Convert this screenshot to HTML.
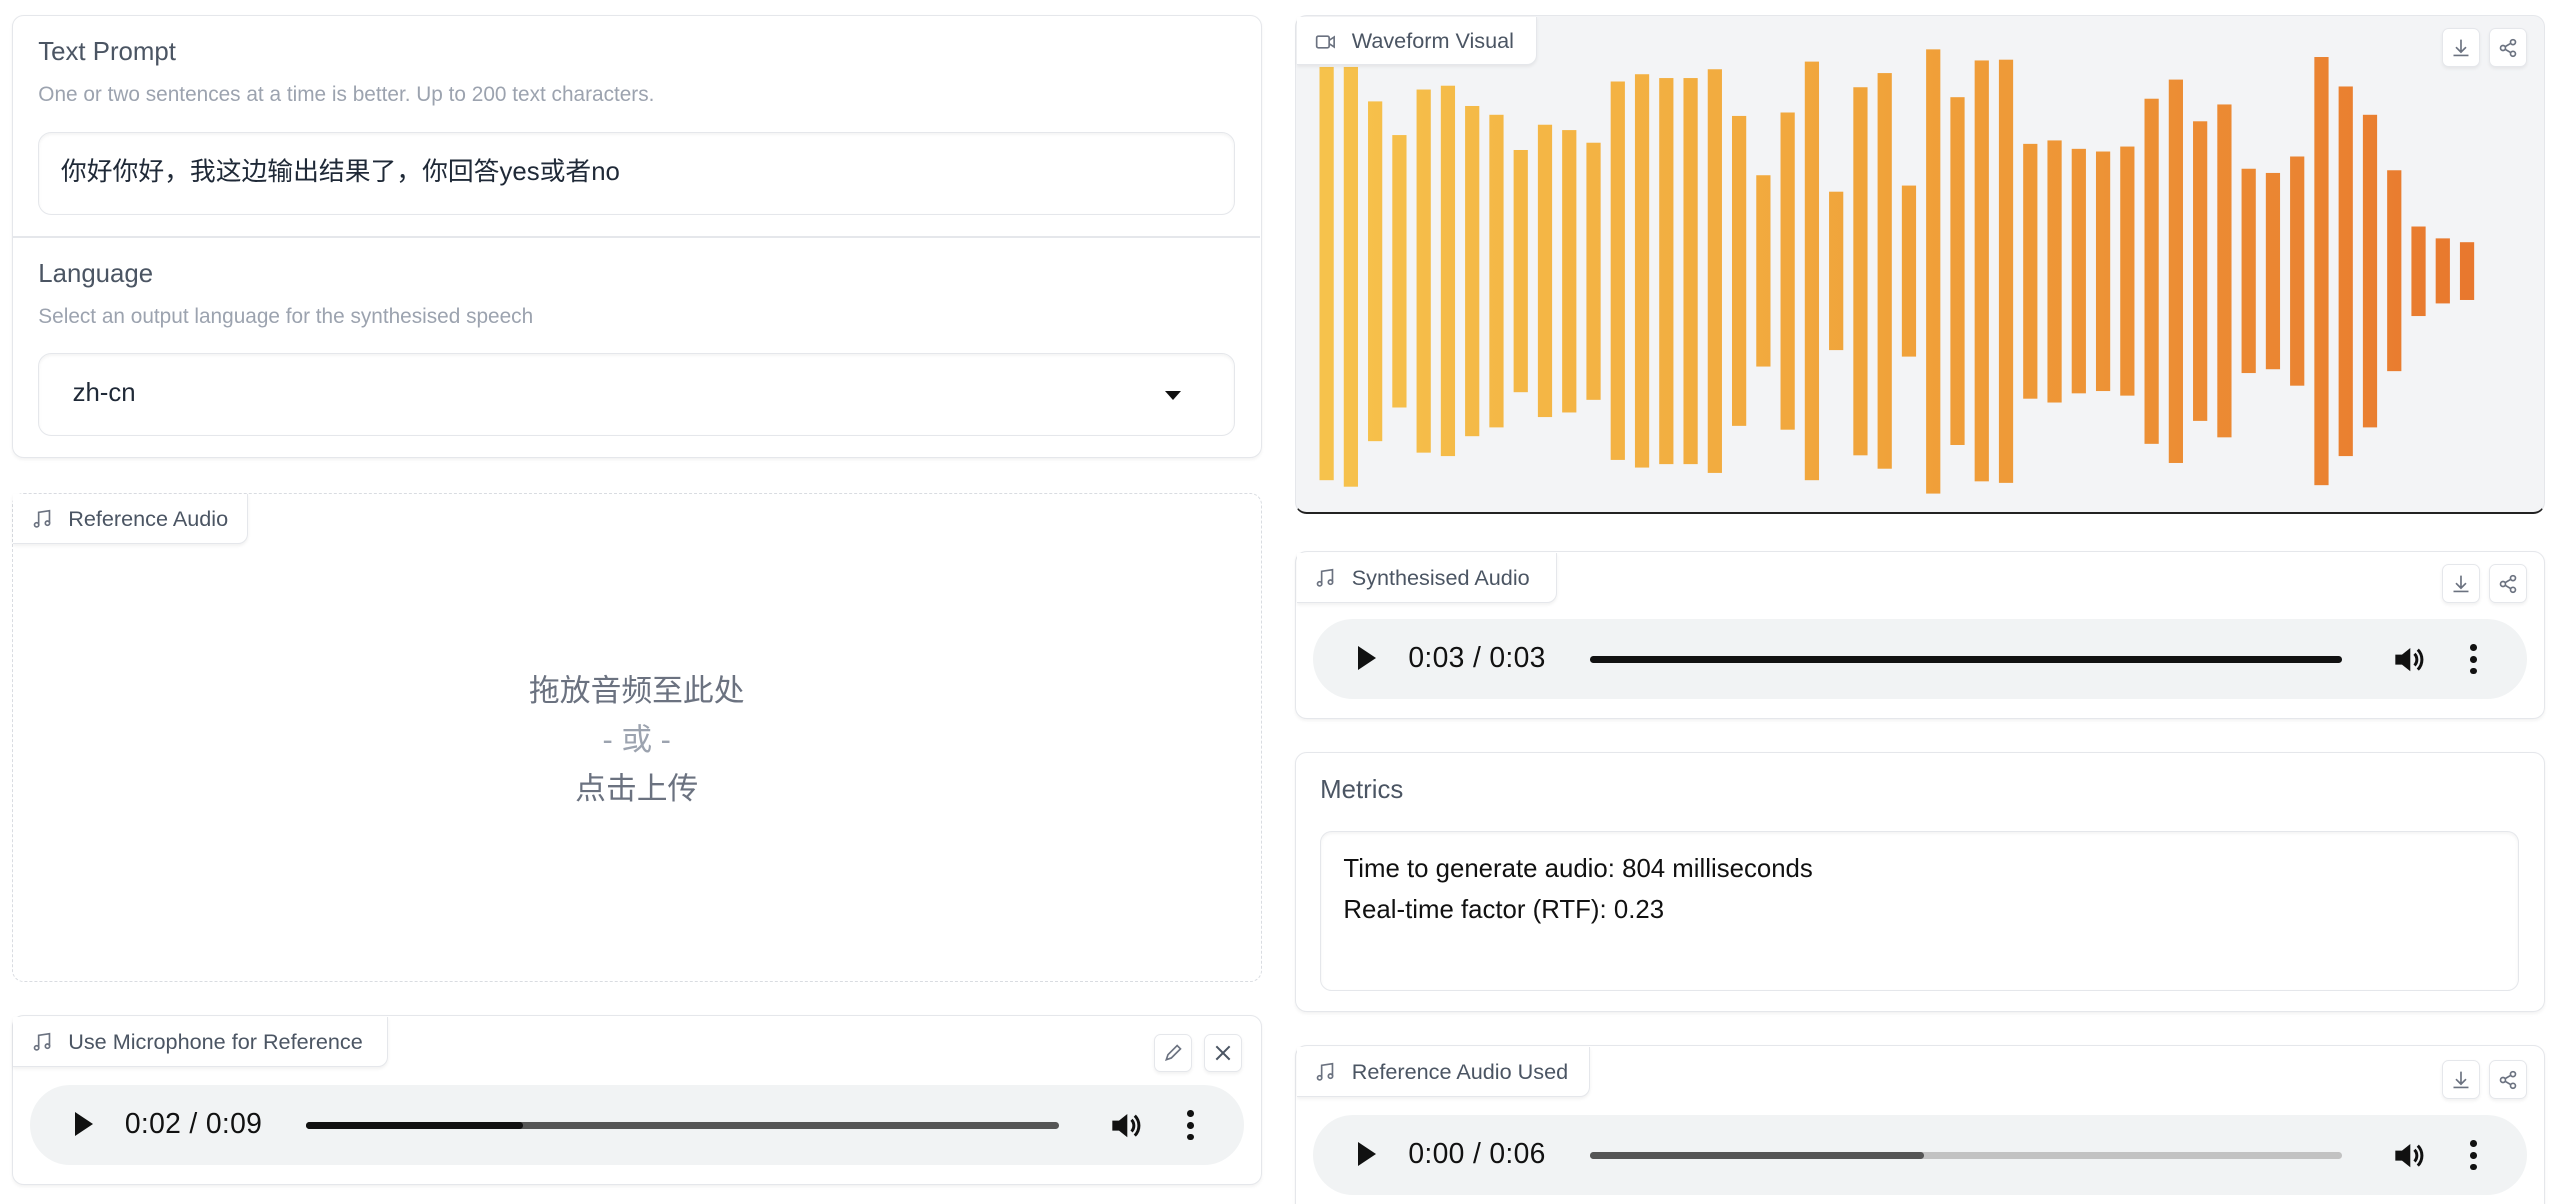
<!DOCTYPE html>
<html><head><meta charset="utf-8"><style>
html,body{margin:0;padding:0;background:#fff;overflow:hidden}
body{width:1545px;height:723.3px;zoom:1.66473;position:relative;font-family:"Liberation Sans","Noto Sans CJK SC",sans-serif}
.a{position:absolute;box-sizing:border-box}
.card{border:1px solid #e5e7eb;border-radius:7px;background:#fff;box-shadow:0 1px 2px rgba(0,0,0,.05)}
.lbl{font-size:15.5px;color:#4b5563}
.desc{font-size:12.5px;color:#9ca3af}
.inp{border:1px solid #e5e7eb;border-radius:8px;background:#fff;box-shadow:inset 0 1px 2px rgba(0,0,0,.05);font-size:15.5px;color:#1f2937;padding-left:13px;line-height:48px}
.tab{background:#fff;border:1px solid #e5e7eb;border-top:none;border-left:none;border-radius:0 0 6px 0;font-size:13px;color:#4b5563;height:30px;line-height:30px;padding-left:33px;box-shadow:0 1px 2px rgba(0,0,0,.06)}
.tab svg{position:absolute;left:11px;top:9px}
.btn{width:23px;height:23px;border:1px solid #e5e7eb;border-radius:4px;background:#fff;box-shadow:0 1px 2px rgba(0,0,0,.06)}
.btn svg{position:absolute;left:5px;top:5px}
.pl{background:#f1f3f4;border-radius:24px;height:48px}
.pl .t{position:absolute;top:13px;font-size:17px;color:#111;letter-spacing:.2px}
.play{position:absolute;top:16px;width:0;height:0;border-left:11px solid #111;border-top:7.5px solid transparent;border-bottom:7.5px solid transparent}
.bar{position:absolute;top:22px;height:4px;border-radius:2px}
.dots{position:absolute;top:15px;width:4px}
.dots i{display:block;width:4px;height:4px;border-radius:2px;background:#111;margin-bottom:3px}
</style></head><body>

<!-- Card 1 -->
<div class="a card" style="left:7px;top:9px;width:751px;height:266px"></div>
<div class="a lbl" style="left:23px;top:23px">Text Prompt</div>
<div class="a desc" style="left:23px;top:50px">One or two sentences at a time is better. Up to 200 text characters.</div>
<div class="a inp" style="left:23px;top:79px;width:719px;height:50px">你好你好，我这边输出结果了，你回答yes或者no</div>
<div class="a" style="left:8px;top:142px;width:749px;height:1px;background:#e5e7eb"></div>
<div class="a lbl" style="left:23px;top:156px">Language</div>
<div class="a desc" style="left:23px;top:183px">Select an output language for the synthesised speech</div>
<div class="a inp" style="left:23px;top:212px;width:719px;height:50px;padding-left:20px">zh-cn</div>
<div class="a" style="left:700px;top:235px;width:0;height:0;border-left:5px solid transparent;border-right:5px solid transparent;border-top:6px solid #111"></div>

<!-- Reference Audio -->
<div class="a" style="left:7px;top:296px;width:751px;height:294px;border:1px dashed #d9dce1;border-radius:7px"></div>
<div class="a tab" style="left:8px;top:297px;width:141px">
<svg width="12" height="12" viewBox="0 0 12 12" fill="none" stroke="#6b7280" stroke-width="1"><path d="M4 9.5V2L10.5 1V8.5"/><circle cx="2.8" cy="9.5" r="1.3"/><circle cx="9.3" cy="8.5" r="1.3"/></svg>Reference Audio</div>
<div class="a" style="left:7px;top:400px;width:751px;text-align:center;font-size:18.5px;color:#6b7280;line-height:29.5px">拖放音频至此处<br><span style="color:#9ca3af">- 或 -</span><br>点击上传</div>

<!-- Mic card -->
<div class="a card" style="left:7px;top:610px;width:751px;height:102px"></div>
<div class="a tab" style="left:8px;top:611px;width:225px">
<svg width="12" height="12" viewBox="0 0 12 12" fill="none" stroke="#6b7280" stroke-width="1"><path d="M4 9.5V2L10.5 1V8.5"/><circle cx="2.8" cy="9.5" r="1.3"/><circle cx="9.3" cy="8.5" r="1.3"/></svg>Use Microphone for Reference</div>
<div class="a btn" style="left:693px;top:621px"><svg width="12" height="12" viewBox="0 0 12 12" fill="none" stroke="#6b7280" stroke-width="1"><path d="M2 10l1-3 5.5-5.5 2 2L5 9z"/></svg></div>
<div class="a btn" style="left:723px;top:621px"><svg width="12" height="12" viewBox="0 0 12 12" fill="none" stroke="#4b5563" stroke-width="1.2"><path d="M2 2l8 8M10 2l-8 8"/></svg></div>
<div class="a pl" style="left:18px;top:652px;width:729px">
<div class="play" style="left:27px"></div>
<div class="t" style="left:57px">0:02 / 0:09</div>
<div class="bar" style="left:166px;width:452px;background:#555"></div>
<div class="bar" style="left:166px;width:130px;background:#111"></div>
<svg class="a" style="left:648px;top:14px" width="20" height="20" viewBox="0 0 20 20"><path d="M2 7h4l5-4v14l-5-4H2z" fill="#111"/><path d="M13.5 6.5a5 5 0 0 1 0 7M15.5 4a8.5 8.5 0 0 1 0 12" stroke="#111" stroke-width="1.8" fill="none"/></svg>
<div class="dots" style="left:695px"><i></i><i></i><i></i></div>
</div>
<div class="a" style="left:7px;top:731px;width:751px;height:10px;border:1px solid #e5e7eb;border-radius:7px 7px 0 0"></div>

<!-- Waveform -->
<div class="a" style="left:778px;top:9px;width:751px;height:300px;border:1px solid #e5e7eb;border-bottom:1.5px solid #222;border-radius:7px;background:#f3f4f6"></div>
<svg class="a" style="left:780.4px;top:0;width:788.1px;height:360.4px" viewBox="0 0 1568 1568" preserveAspectRatio="none">
<defs><linearGradient id="g" gradientUnits="userSpaceOnUse" x1="33" y1="0" x2="1394" y2="0"><stop offset="0" stop-color="#f6c24c"/><stop offset="0.5" stop-color="#f0a23a"/><stop offset="1" stop-color="#e8782e"/></linearGradient></defs>
<g fill="url(#g)">
<rect x="24.5" y="175" width="17" height="1080"/><rect x="53.5" y="175" width="17" height="1097"/><rect x="82.5" y="265" width="17" height="888"/><rect x="111.5" y="353" width="17" height="712"/><rect x="140.5" y="234" width="17" height="949"/><rect x="169.5" y="224" width="17" height="968"/><rect x="198.5" y="277" width="17" height="863"/><rect x="227.5" y="300" width="17" height="817"/><rect x="256.5" y="392" width="17" height="633"/><rect x="285.5" y="326" width="17" height="764"/><rect x="314.5" y="340" width="17" height="738"/><rect x="343.5" y="373" width="17" height="672"/><rect x="372.5" y="213" width="17" height="989"/><rect x="401.5" y="194" width="17" height="1028"/><rect x="430.5" y="204" width="17" height="1009"/><rect x="459.5" y="204" width="17" height="1009"/><rect x="488.5" y="181" width="17" height="1055"/><rect x="517.5" y="303" width="17" height="810"/><rect x="546.5" y="458" width="17" height="500"/><rect x="575.5" y="294" width="17" height="829"/><rect x="604.5" y="161" width="17" height="1094"/><rect x="633.5" y="501" width="17" height="414"/><rect x="662.5" y="228" width="17" height="962"/><rect x="691.5" y="191" width="17" height="1034"/><rect x="720.5" y="485" width="17" height="447"/><rect x="749.5" y="129" width="17" height="1161"/><rect x="778.5" y="254" width="17" height="909"/><rect x="807.5" y="158" width="17" height="1100"/><rect x="836.5" y="156" width="17" height="1106"/><rect x="865.5" y="376" width="17" height="666"/><rect x="894.5" y="367" width="17" height="685"/><rect x="923.5" y="389" width="17" height="639"/><rect x="952.5" y="396" width="17" height="626"/><rect x="981.5" y="383" width="17" height="651"/><rect x="1010.5" y="258" width="17" height="902"/><rect x="1039.5" y="208" width="17" height="1002"/><rect x="1068.5" y="317" width="17" height="783"/><rect x="1097.5" y="273" width="17" height="870"/><rect x="1126.5" y="441" width="17" height="534"/><rect x="1155.5" y="452" width="17" height="513"/><rect x="1184.5" y="409" width="17" height="599"/><rect x="1213.5" y="149" width="17" height="1119"/><rect x="1242.5" y="226" width="17" height="966"/><rect x="1271.5" y="300" width="17" height="817"/><rect x="1300.5" y="445" width="17" height="525"/><rect x="1329.5" y="592" width="17" height="234"/><rect x="1358.5" y="623" width="17" height="170"/><rect x="1387.5" y="633" width="17" height="151"/>
</g></svg>
<div class="a tab" style="left:779px;top:10px;width:144px;height:29px;line-height:29px">
<svg width="13" height="12" viewBox="0 0 13 12" fill="none" stroke="#6b7280" stroke-width="1"><rect x="1" y="2.5" width="7.5" height="7" rx="1"/><path d="M8.5 5l3-2v6l-3-2"/></svg>Waveform Visual</div>
<div class="a btn" style="left:1467px;top:17px"><svg width="12" height="12" viewBox="0 0 12 12" fill="none" stroke="#6b7280" stroke-width="1"><path d="M6 1v7M3 5.5L6 8.5 9 5.5M1.5 10.5h9"/></svg></div>
<div class="a btn" style="left:1495px;top:17px"><svg width="12" height="12" viewBox="0 0 12 12" fill="none" stroke="#6b7280" stroke-width="1"><circle cx="9" cy="2.5" r="1.5"/><circle cx="3" cy="6" r="1.5"/><circle cx="9" cy="9.5" r="1.5"/><path d="M4.3 5.2l3.4-2M4.3 6.8l3.4 2"/></svg></div>

<!-- Synthesised audio -->
<div class="a card" style="left:778px;top:331px;width:751px;height:101px"></div>
<div class="a tab" style="left:779px;top:332px;width:156px">
<svg width="12" height="12" viewBox="0 0 12 12" fill="none" stroke="#6b7280" stroke-width="1"><path d="M4 9.5V2L10.5 1V8.5"/><circle cx="2.8" cy="9.5" r="1.3"/><circle cx="9.3" cy="8.5" r="1.3"/></svg>Synthesised Audio</div>
<div class="a btn" style="left:1467px;top:339px"><svg width="12" height="12" viewBox="0 0 12 12" fill="none" stroke="#6b7280" stroke-width="1"><path d="M6 1v7M3 5.5L6 8.5 9 5.5M1.5 10.5h9"/></svg></div>
<div class="a btn" style="left:1495px;top:339px"><svg width="12" height="12" viewBox="0 0 12 12" fill="none" stroke="#6b7280" stroke-width="1"><circle cx="9" cy="2.5" r="1.5"/><circle cx="3" cy="6" r="1.5"/><circle cx="9" cy="9.5" r="1.5"/><path d="M4.3 5.2l3.4-2M4.3 6.8l3.4 2"/></svg></div>
<div class="a pl" style="left:789px;top:372px;width:729px">
<div class="play" style="left:27px"></div>
<div class="t" style="left:57px">0:03 / 0:03</div>
<div class="bar" style="left:166px;width:452px;background:#111"></div>
<svg class="a" style="left:648px;top:14px" width="20" height="20" viewBox="0 0 20 20"><path d="M2 7h4l5-4v14l-5-4H2z" fill="#111"/><path d="M13.5 6.5a5 5 0 0 1 0 7M15.5 4a8.5 8.5 0 0 1 0 12" stroke="#111" stroke-width="1.8" fill="none"/></svg>
<div class="dots" style="left:695px"><i></i><i></i><i></i></div>
</div>

<!-- Metrics -->
<div class="a card" style="left:778px;top:452px;width:751px;height:156px"></div>
<div class="a lbl" style="left:793px;top:466px">Metrics</div>
<div class="a" style="left:793px;top:499px;width:720px;height:96px;border:1px solid #e5e7eb;border-radius:7px;box-shadow:inset 0 1px 2px rgba(0,0,0,.05)"></div>
<div class="a" style="left:807px;top:510px;font-size:15.5px;color:#111;line-height:24.5px">Time to generate audio: 804 milliseconds<br>Real-time factor (RTF): 0.23</div>

<!-- Reference Audio Used -->
<div class="a card" style="left:778px;top:628px;width:751px;height:102px"></div>
<div class="a tab" style="left:779px;top:629px;width:176px">
<svg width="12" height="12" viewBox="0 0 12 12" fill="none" stroke="#6b7280" stroke-width="1"><path d="M4 9.5V2L10.5 1V8.5"/><circle cx="2.8" cy="9.5" r="1.3"/><circle cx="9.3" cy="8.5" r="1.3"/></svg>Reference Audio Used</div>
<div class="a btn" style="left:1467px;top:637px"><svg width="12" height="12" viewBox="0 0 12 12" fill="none" stroke="#6b7280" stroke-width="1"><path d="M6 1v7M3 5.5L6 8.5 9 5.5M1.5 10.5h9"/></svg></div>
<div class="a btn" style="left:1495px;top:637px"><svg width="12" height="12" viewBox="0 0 12 12" fill="none" stroke="#6b7280" stroke-width="1"><circle cx="9" cy="2.5" r="1.5"/><circle cx="3" cy="6" r="1.5"/><circle cx="9" cy="9.5" r="1.5"/><path d="M4.3 5.2l3.4-2M4.3 6.8l3.4 2"/></svg></div>
<div class="a pl" style="left:789px;top:670px;width:729px">
<div class="play" style="left:27px"></div>
<div class="t" style="left:57px">0:00 / 0:06</div>
<div class="bar" style="left:166px;width:452px;background:#c2c2c2"></div>
<div class="bar" style="left:166px;width:201px;background:#555"></div>
<svg class="a" style="left:648px;top:14px" width="20" height="20" viewBox="0 0 20 20"><path d="M2 7h4l5-4v14l-5-4H2z" fill="#111"/><path d="M13.5 6.5a5 5 0 0 1 0 7M15.5 4a8.5 8.5 0 0 1 0 12" stroke="#111" stroke-width="1.8" fill="none"/></svg>
<div class="dots" style="left:695px"><i></i><i></i><i></i></div>
</div>

</body></html>
